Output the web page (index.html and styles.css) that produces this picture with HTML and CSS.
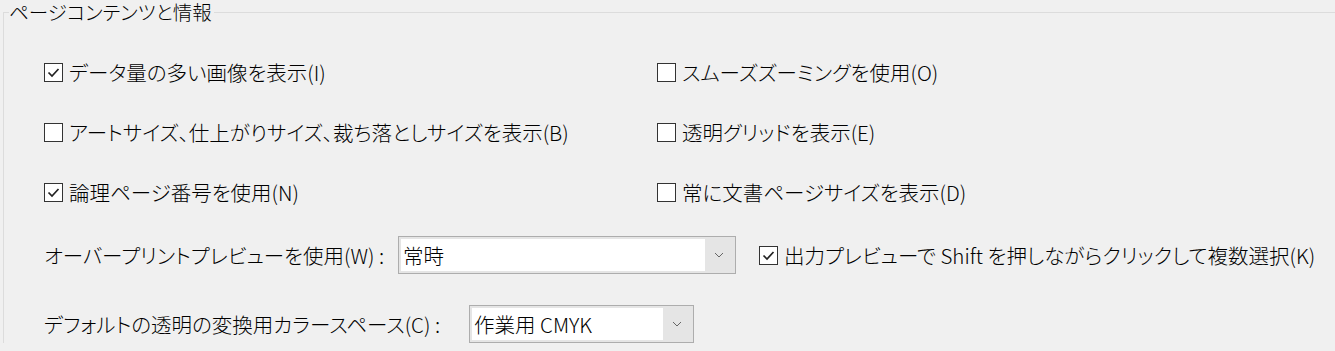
FILE: index.html
```html
<!DOCTYPE html>
<html lang="ja">
<head>
    <meta charset="UTF-8">
    <title>ページコンテンツと情報</title>
    <link rel="stylesheet" href="styles.css">
</head>
<body>
    <fieldset class="group">
        <legend>ページコンテンツと情報</legend>

        <div class="checks">
            <label class="check">
                <span class="box checked"><svg viewBox="0 0 17 17"><path d="M3.5 8.5 L7 12 L13.5 5"/></svg></span>
                データ量の多い画像を表示(I)
            </label>
            <label class="check">
                <span class="box"></span>
                スムーズズーミングを使用(O)
            </label>
            <label class="check">
                <span class="box"></span>
                アートサイズ、仕上がりサイズ、裁ち落としサイズを表示(B)
            </label>
            <label class="check">
                <span class="box"></span>
                透明グリッドを表示(E)
            </label>
            <label class="check">
                <span class="box checked"><svg viewBox="0 0 17 17"><path d="M3.5 8.5 L7 12 L13.5 5"/></svg></span>
                論理ページ番号を使用(N)
            </label>
            <label class="check">
                <span class="box"></span>
                常に文書ページサイズを表示(D)
            </label>
        </div>

        <div class="row row-overprint">
            <span class="field-label">オーバープリントプレビューを使用(W) :</span>
            <div class="combo combo-wide">
                <span class="combo-value">常時</span>
                <span class="combo-arrow"><svg viewBox="0 0 10 6"><path d="M1 1 L5 5 L9 1"/></svg></span>
            </div>
            <label class="check">
                <span class="box checked"><svg viewBox="0 0 17 17"><path d="M3.5 8.5 L7 12 L13.5 5"/></svg></span>
                出力プレビューで Shift を押しながらクリックして複数選択(K)
            </label>
        </div>

        <div class="row row-space">
            <span class="field-label">デフォルトの透明の変換用カラースペース(C) :</span>
            <div class="combo combo-narrow">
                <span class="combo-value">作業用 CMYK</span>
                <span class="combo-arrow"><svg viewBox="0 0 10 6"><path d="M1 1 L5 5 L9 1"/></svg></span>
            </div>
        </div>
    </fieldset>
</body>
</html>
```

FILE: styles.css
```css
body {
    margin: 0;
    background: #f0f0f0;
    color: #000;
    font-family: "Noto Sans CJK JP", "Noto Sans", sans-serif;
    font-size: 20.5px;
    font-weight: 300;
    font-feature-settings: "palt"; /* proportional kana like the Windows UI font */
    height: 351px;
    overflow: hidden;
}

.group {
    margin: 0 0 0 3px;
    padding: 0;
    border: 1px solid #dcdcdc;
    border-right: none;
    border-bottom: none;
    box-sizing: border-box;
}

.group legend {
    margin-left: 5px;
    padding: 0 2px 0 0;
    line-height: 24px;
    height: 24px;
    font-size: 19.5px;
}

/* two columns of checkboxes */
.checks {
    display: grid;
    grid-template-columns: 613px auto;
    grid-auto-rows: 60px;
    padding: 36px 0 0 40px;
}

.check {
    display: flex;
    align-items: center;
    gap: 6px;
    height: 24px;
    white-space: nowrap;
}

.box {
    width: 19px;
    height: 19px;
    border: 1px solid #333;
    background: #fff;
    box-sizing: border-box;
    flex: none;
}

.box svg {
    display: block;
    width: 17px;
    height: 17px;
}

.box svg path {
    fill: none;
    stroke: #222;
    stroke-width: 1.7;
}

.row {
    display: flex;
    align-items: center;
    padding-left: 40px;
    white-space: nowrap;
}

.row-overprint {
    margin-top: -4px;
}

.row-overprint .field-label {
    width: 354px;
}

.row-overprint .check {
    margin-left: 23px;
}

.row-space {
    margin-top: 31px;
}

.row-space .field-label {
    width: 425px;
}

.combo {
    display: flex;
    height: 38px;
    border: 1px solid #adadad;
    background: #e5e5e5;
    box-sizing: border-box;
    padding: 2px;
    flex: none;
}

.combo-wide {
    width: 338px;
}

.combo-narrow {
    width: 225px;
}

.combo-value {
    flex: 1;
    background: #fff;
    padding-left: 2px;
    line-height: 32px;
}

.combo-arrow {
    width: 28px;
    display: flex;
    align-items: center;
    justify-content: center;
}

.combo-arrow svg {
    width: 10px;
    height: 6px;
}

.combo-arrow svg path {
    fill: none;
    stroke: #666;
    stroke-width: 1;
}
```
